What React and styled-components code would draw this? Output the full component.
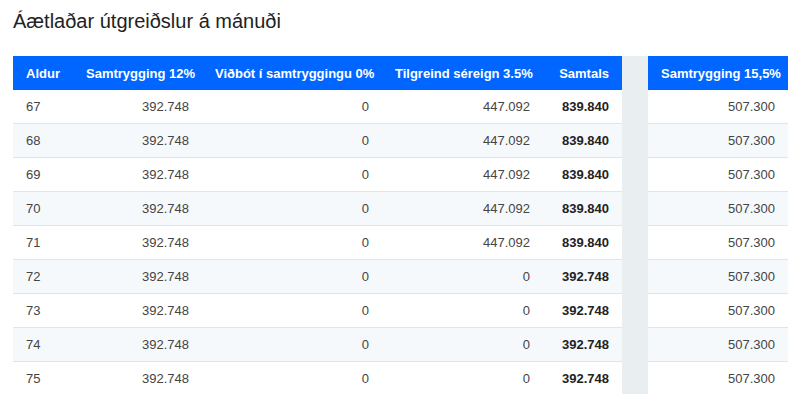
import styled, { createGlobalStyle } from "styled-components";

const GlobalStyle = createGlobalStyle`
  body {
    margin: 0;
    background: #ffffff;
    font-family: "Liberation Sans", Arial, sans-serif;
    color: #333;
  }
`;

const Page = styled.div`
  display: flex;
  flex-direction: column;
  padding: 9px 12px 0 13px;
  height: 394px;
  box-sizing: border-box;
  overflow: hidden;
`;

const Title = styled.h2`
  margin: 0 0 23px 0;
  font-size: 20px;
  font-weight: 400;
  color: #222;
  line-height: 24px;
`;

const Tables = styled.div`
  flex: 1;
  display: flex;
  align-items: flex-start;
`;

const Table = styled.table`
  border-collapse: collapse;
  table-layout: fixed;
  width: ${(p) => p.width}px;
  font-size: 13px;
`;

const Spacer = styled.div`
  width: 26px;
  flex: none;
  background: #e9eff1;
  align-self: stretch;
`;

const Th = styled.th`
  background: #0066ff;
  color: #fff;
  font-weight: 700;
  height: 34px;
  padding: 0 13px;
  text-align: ${(p) => (p.left ? "left" : "right")};
  white-space: nowrap;
`;

const Row = styled.tr`
  background: ${(p) => (p.alt ? "#f6f9fb" : "#fff")};
  border-bottom: 1px solid #dfe5ea;
`;

const Td = styled.td`
  height: 33px;
  padding: 0 13px;
  text-align: ${(p) => (p.left ? "left" : "right")};
  font-weight: ${(p) => (p.bold ? 700 : 400)};
  color: ${(p) => (p.bold ? "#222" : "#444")};
  white-space: nowrap;
`;

const rows = [
  [67, "392.748", "0", "447.092", "839.840"],
  [68, "392.748", "0", "447.092", "839.840"],
  [69, "392.748", "0", "447.092", "839.840"],
  [70, "392.748", "0", "447.092", "839.840"],
  [71, "392.748", "0", "447.092", "839.840"],
  [72, "392.748", "0", "0", "392.748"],
  [73, "392.748", "0", "0", "392.748"],
  [74, "392.748", "0", "0", "392.748"],
  [75, "392.748", "0", "0", "392.748"],
];

export default function App() {
  return (
    <>
      <GlobalStyle />
      <Page>
        <Title>Áætlaðar útgreiðslur á mánuði</Title>
        <Tables>
          <Table width={609}>
            <colgroup>
              <col style={{ width: 60 }} />
              <col style={{ width: 129 }} />
              <col style={{ width: 180 }} />
              <col style={{ width: 161 }} />
              <col style={{ width: 79 }} />
            </colgroup>
            <thead>
              <tr>
                <Th left>Aldur</Th>
                <Th>Samtrygging 12%</Th>
                <Th>Viðbót í samtryggingu 0%</Th>
                <Th>Tilgreind séreign 3.5%</Th>
                <Th>Samtals</Th>
              </tr>
            </thead>
            <tbody>
              {rows.map((r, i) => (
                <Row key={r[0]} alt={i % 2 === 1}>
                  <Td left>{r[0]}</Td>
                  <Td>{r[1]}</Td>
                  <Td>{r[2]}</Td>
                  <Td>{r[3]}</Td>
                  <Td bold>{r[4]}</Td>
                </Row>
              ))}
            </tbody>
          </Table>
          <Spacer />
          <Table width={140}>
            <thead>
              <tr>
                <Th>Samtrygging 15,5%</Th>
              </tr>
            </thead>
            <tbody>
              {rows.map((r, i) => (
                <Row key={r[0]} alt={i % 2 === 1}>
                  <Td>507.300</Td>
                </Row>
              ))}
            </tbody>
          </Table>
        </Tables>
      </Page>
    </>
  );
}
